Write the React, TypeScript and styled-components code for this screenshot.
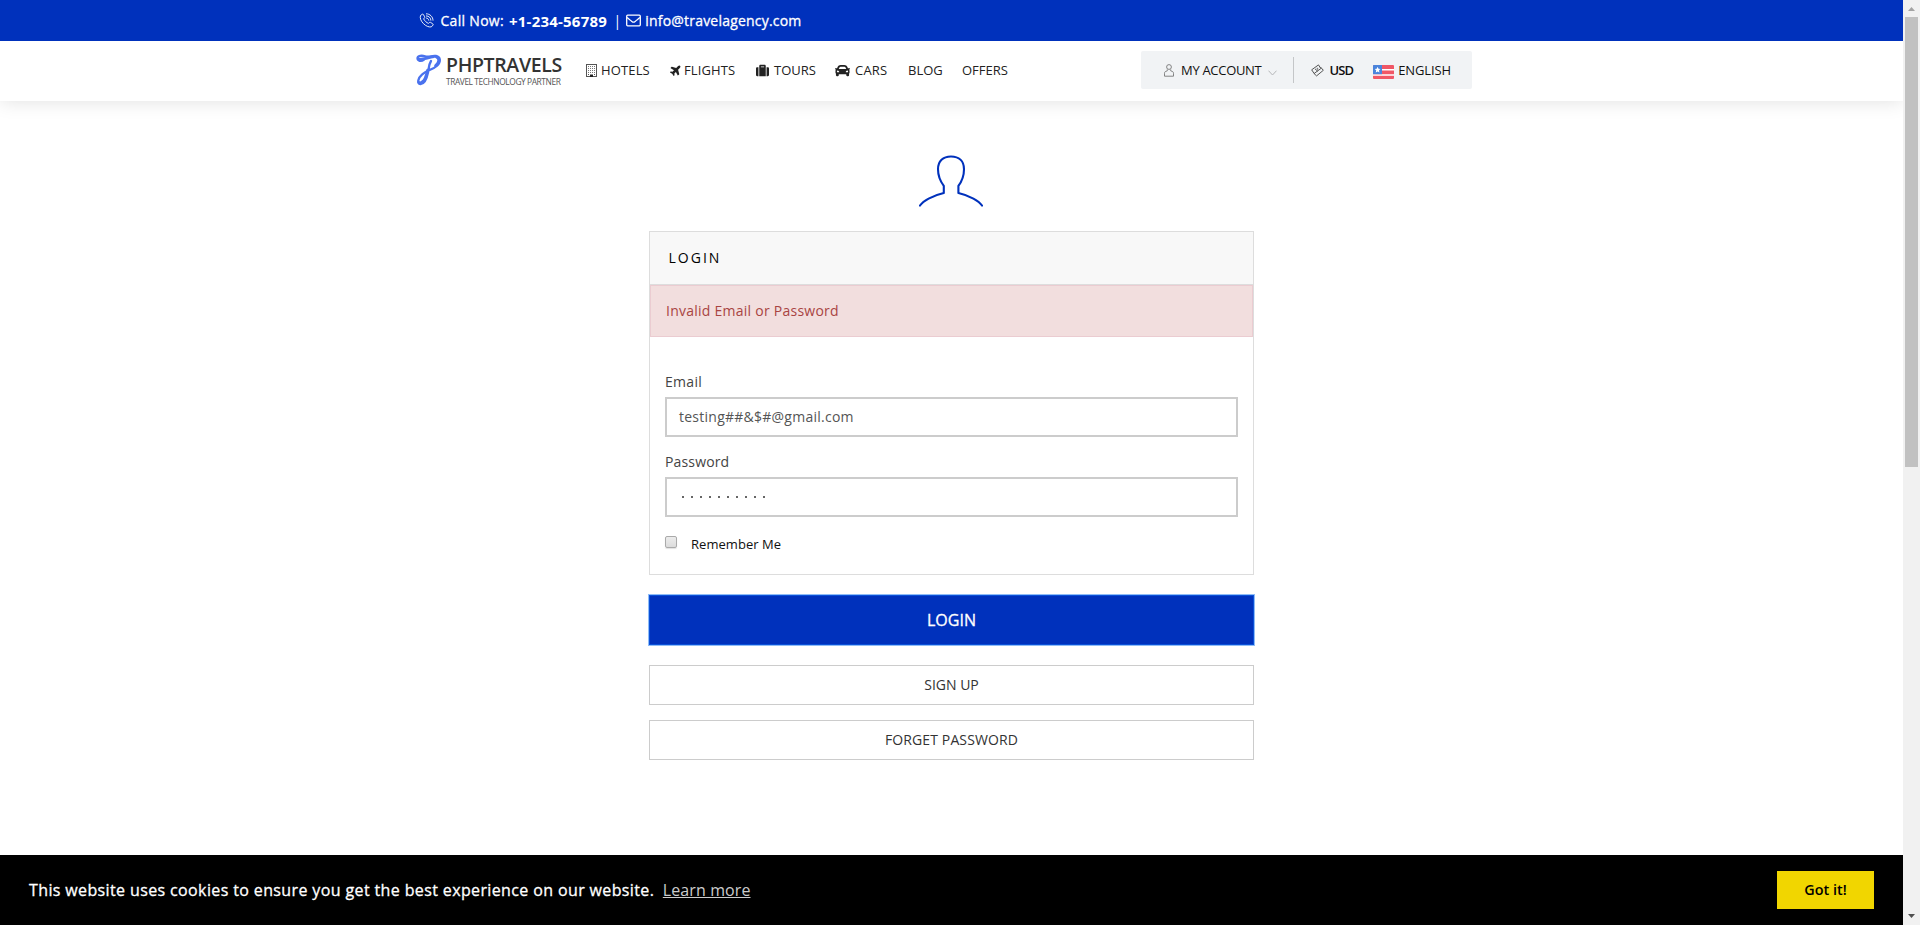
import React from "react";
import styled, { createGlobalStyle } from "styled-components";
import { FaPlane, FaSuitcase, FaCar } from "react-icons/fa";

const Global = createGlobalStyle`
  * { box-sizing: border-box; }
  html, body { margin: 0; padding: 0; background: #fff; overflow: hidden; }
  body { font-family: "Open Sans", "Noto Sans", sans-serif; font-size: 13px; color: #222; }
  svg { display: block; flex: none; }
`;

const Window = styled.div`
  display: flex;
  width: 1920px;
  height: 925px;
`;

const Page = styled.div`
  display: flex;
  flex-direction: column;
  width: 1903px;
  height: 925px;
  overflow: hidden;
`;

const TopBar = styled.div`
  position: relative;
  z-index: 1;
  display: flex;
  align-items: center;
  height: 41px;
  flex: none;
  padding-left: 419px;
  background: #0031bc;
  color: #fff;
`;

const Label = styled.span<{ $size?: number; $weight?: number; $track?: number; $gap?: number; $firm?: boolean }>`
  font-size: ${(p) => p.$size ?? 14}px;
  font-weight: ${(p) => p.$weight ?? 400};
  letter-spacing: ${(p) => p.$track ?? 0}px;
  margin-left: ${(p) => p.$gap ?? 0}px;
  line-height: 20px;
  white-space: nowrap;
  -webkit-text-stroke: ${(p) => (p.$firm ? "0.3px currentColor" : "0")};
`;

const NavBar = styled.nav`
  display: flex;
  align-items: center;
  height: 60px;
  flex: none;
  padding: 0 0 2px 416px;
  background: #fff;
  box-shadow: 0 0 20px rgba(0, 0, 0, 0.13);
`;

const Brand = styled.div`
  display: flex;
  width: 170px;
  gap: 4px;
  align-items: flex-start;
`;

const BrandText = styled.div`
  display: flex;
  flex-direction: column;
  gap: 1px;
  padding-top: 1px;
`;

const BrandName = styled.span`
  font-size: 19.5px;
  line-height: 20px;
  font-weight: 600;
  letter-spacing: -0.35px;
  color: #333;
  white-space: nowrap;
`;

const BrandTag = styled.span`
  font-size: 8.4px;
  line-height: 11px;
  letter-spacing: -0.42px;
  color: #555;
  white-space: nowrap;
`;

const Menu = styled.div`
  display: flex;
  width: 555px;
  gap: 20px;
`;

const MenuItem = styled.a<{ $width: number; $gap: number; $track?: number }>`
  display: flex;
  align-items: center;
  gap: ${(p) => p.$gap}px;
  width: ${(p) => p.$width}px;
  font-size: 13px;
  line-height: 20px;
  letter-spacing: ${(p) => p.$track ?? 0}px;
  color: #222;
  white-space: nowrap;
`;

const Tools = styled.div`
  display: flex;
  align-items: center;
  width: 331px;
  height: 38px;
  padding-left: 23px;
  border-radius: 2px;
  background: #f1f3f5;
  color: #111;
`;

const Divider = styled.i`
  width: 1px;
  height: 26px;
  margin: 0 17px 0 16px;
  background: #c4c6c8;
`;

const Main = styled.main`
  display: flex;
  flex: 1;
  flex-direction: column;
  width: 605px;
  margin-left: 649px;
  padding-top: 54px;
`;

const Avatar = styled.div`
  display: flex;
  justify-content: center;
  height: 76px;
  padding-right: 2px;
`;

const Card = styled.section`
  height: 344px;
  border: 1px solid #ddd;
`;

const CardHead = styled.header`
  display: flex;
  align-items: center;
  height: 53px;
  padding-left: 18.5px;
  background: #f8f8f8;
  border-bottom: 1px solid #ddd;
  color: #000;
`;

const Alert = styled.div`
  display: flex;
  align-items: center;
  height: 52px;
  padding-left: 15px;
  background: #f2dede;
  border: 1px solid #ebccd1;
  color: #a94442;
`;

const Form = styled.form`
  display: flex;
  flex-direction: column;
  padding: 35px 15px 0;
  color: #444;
`;

const Field = styled.div`
  display: flex;
  flex-direction: column;
  gap: 5px;
  height: 80px;
`;

const Box = styled.div`
  display: flex;
  align-items: center;
  height: 40px;
  padding-left: 12px;
  border: 2px solid #ccc;
  color: #555;
`;

const Dots = styled.span`
  display: flex;
  gap: 7px;
  padding: 0 0 0 3px;
  i {
    width: 2px;
    height: 2px;
    background: #666;
  }
`;

const Remember = styled.label`
  display: flex;
  align-items: flex-start;
  padding-top: 2px;
  color: #111;
`;

const Tick = styled.i`
  width: 12px;
  height: 12px;
  margin-top: 2px;
  border: 1px solid #aaa;
  border-radius: 2px;
  background: linear-gradient(#ececec, #dcdcdc);
  box-shadow: 0 1px 1px rgba(0, 0, 0, 0.12);
`;

const Submit = styled.button`
  height: 50px;
  margin: 20px 0;
  padding: 0;
  border: 1px solid #0a50d8;
  outline: 1px solid #8fbcf7;
  background: #0031bc;
  color: #fff;
  font: 400 16px/22px "Open Sans", sans-serif;
  -webkit-text-stroke: 0.3px currentColor;
`;

const Outline = styled.button<{ $track: number }>`
  height: 40px;
  margin-bottom: 15px;
  padding: 0;
  border: 1px solid #ccc;
  background: #fff;
  color: #333;
  font: 400 14px/20px "Open Sans", sans-serif;
  letter-spacing: ${(p) => p.$track}px;
`;

const Cookie = styled.footer`
  display: flex;
  align-items: center;
  height: 70px;
  flex: none;
  padding: 0 29px;
  background: #000;
  color: #fff;
`;

const Learn = styled.a`
  margin-left: 8.5px;
  font-size: 16px;
  line-height: 24px;
  color: #ccc;
  text-decoration: underline;
  letter-spacing: 0.1px;
`;

const Accept = styled.button`
  width: 97px;
  height: 38px;
  margin-left: auto;
  padding: 0;
  border: 0;
  background: #f1d600;
  color: #000;
  font: 600 14.4px/20px "Open Sans", sans-serif;
`;

const Scrollbar = styled.aside`
  display: flex;
  flex-direction: column;
  align-items: center;
  justify-content: space-between;
  width: 17px;
  height: 925px;
  background: #f1f1f1;
`;

const Thumb = styled.i`
  width: 13px;
  height: 450px;
  margin-bottom: auto;
  background: #c1c1c1;
`;

const Arrow = styled.svg`
  width: 17px;
  height: 17px;
`;

const PhoneIcon = () => (
  <svg width="15" height="15" viewBox="0 0 15 15" fill="none" stroke="#fff" strokeWidth="0.9">
    <path d="M3.4 1.2 1.5 2.5C.6 5 2.1 8.3 4.5 10.7c2.5 2.5 5.4 3.6 7.8 3.2l1.7-1.8c.3-.5.2-.9-.2-1.2l-2.200-1.500c-.5-.3-.9-.2-1.200.1l-.9.900C7.500 9.700 5.500 7.700 4.600 5.900l.9-1c.3-.3.300-.7.100-1.100L4.400 1.500c-.2-.4-.6-.5-1-.3Z" />
    <path d="M7 .8c4 0 7 3 7 6.800M7 2.900c2.800 0 4.900 2 4.900 4.700M7.100 5c1.500.1 2.600 1.200 2.700 2.600" />
  </svg>
);

const MailIcon = () => (
  <svg width="15" height="13" viewBox="0 0 15 13" fill="none" stroke="#fff" strokeWidth="1.3">
    <rect x=".7" y="1.2" width="13.6" height="10.6" rx="1" />
    <path d="M1 3.600c2 1.600 3.500 2.600 4.900 3.800.9.8 2.300.8 3.200 0C10.500 6.200 12 5.200 14 3.600" />
  </svg>
);

const LogoMark = () => (
  <svg width="26" height="32" viewBox="0 0 26 32" fill="none" stroke="#4a72ee" strokeLinecap="round" strokeLinejoin="round">
    <path d="M8 5.500C5 8 1.500 6.800 1.500 4.300 1.500 1.500 6 1.300 9 2.300 13 3.600 16 1.200 20 2c4.800 1 5 5.800 1 9.700-4 3.800-10.500 4.800-14.800 8.600C1.800 24 .8 29.800 4.300 30c4.200.2 6.500-5.500 7.700-11.500.8-4 .7-8 3-11.500" strokeWidth="2.3" />
    <path d="M3 5c4.500 1 9-1.800 15-2.300M2.800 28.300c1.800 1.400 5-.8 6.400-4.300 1-2.600 1.700-5 2.400-8" strokeWidth="2.7" />
    <path d="M20.500 3c3.600 1.600 2.800 5.600-.8 8.700" strokeWidth="3" />
  </svg>
);

const HotelIcon = () => (
  <svg width="11" height="13" viewBox="0 0 11 13" fill="none" stroke="#555">
    <rect x=".5" y=".5" width="10" height="12" />
    <path d="M2 2.500h7M2 4.500h7M2 6.500h7M2 8.500h7" strokeDasharray="1 1" stroke="#777" />
    <path d="M2 10.500h1M8 10.500h1" />
    <path d="M4 10.500h3V13H4z" fill="#222" stroke="none" />
  </svg>
);

const PersonIcon = () => (
  <svg width="10" height="13" viewBox="0 0 10 13" fill="none" stroke="#777" strokeWidth=".9">
    <circle cx="5" cy="3" r="2.4" />
    <path d="M3.300 5.500v1.300L1.300 7.600C.7 8 .5 8.700.5 9.300v2.900h9V9.300c0-.6-.2-1.300-.8-1.700L6.700 6.800V5.500" />
  </svg>
);

const ChevronIcon = () => (
  <svg width="9" height="11" viewBox="0 -5 9 11" fill="none" stroke="#b4b6b8" strokeWidth="1">
    <path d="m.5.7 4 4.300 4-4.300" />
  </svg>
);

const CashIcon = () => (
  <svg width="13" height="13" viewBox="0 0 13 13" fill="none" stroke="#444" strokeWidth=".9">
    <path d="M.7 5.800 7.500.900l2.300 3.700-6.700 4.900Z" />
    <path d="M9.400 2.900l2.900 3.400-6.700 5.600-2.800-2.600M4 4.900l2.700 2.300M5.700 4.200c1-.4 1.600.9.600 1.600" />
  </svg>
);

const FlagArt = styled.svg`
  margin-top: 4px;
`;

const Flag = () => (
  <FlagArt width="21" height="14" viewBox="0 0 21 14">
    <clipPath id="flag"><rect width="21" height="14" rx="1" /></clipPath>
    <g clipPath="url(#flag)">
      <rect width="21" height="14" fill="#f05766" />
      <path d="M0 4h21v1.600H0zM0 9.200h21v1.600H0z" fill="#fff" />
      <rect width="9" height="9.2" fill="#4a84dc" />
      <path d="m4.600 1.800.9 1.900 2 .2-1.500 1.400.4 2.100-1.800-1-1.800 1 .4-2.100-1.500-1.400 2-.2Z" fill="#fff" />
    </g>
  </FlagArt>
);

const UserIcon = () => (
  <svg width="66" height="53" viewBox="0 0 66 54" preserveAspectRatio="none" fill="none" stroke="#0031bc" strokeWidth="2.1" strokeLinecap="round" strokeLinejoin="round">
    <path d="M2 51.500C5 47 14 41.500 25.800 38.800V31.500C22.500 27 20 20 20 14.500 20 6 25 1.500 33 1.500S46 6 46 14.500C46 20 43.700 27 40.400 31.500V38.800C52 41.500 61 47 64 51.500" />
  </svg>
);

export default function App() {
  return (
    <Window>
      <Global />
      <Page>
        <TopBar>
          <PhoneIcon />
          <Label $gap={6.5} $track={0.3} $firm>Call Now:</Label>
          <Label $gap={5} $weight={700} $size={15} $track={0.22}>+1-234-56789</Label>
          <Label $gap={6.5}>|</Label>
          <Label $gap={5}><MailIcon /></Label>
          <Label $gap={4} $track={0.2} $firm>info@travelagency.com</Label>
        </TopBar>
        <NavBar>
          <Brand>
            <LogoMark />
            <BrandText>
              <BrandName>PHPTRAVELS</BrandName>
              <BrandTag>TRAVEL TECHNOLOGY PARTNER</BrandTag>
            </BrandText>
          </Brand>
          <Menu>
            <MenuItem $width={64} $gap={4} $track={0.15}><HotelIcon />HOTELS</MenuItem>
            <MenuItem $width={66} $gap={2} $track={0.1}><FaPlane size={12} transform="rotate(-45)" />FLIGHTS</MenuItem>
            <MenuItem $width={59} $gap={5}><FaSuitcase size={13} />TOURS</MenuItem>
            <MenuItem $width={53} $gap={5} $track={0.2}><FaCar size={15} />CARS</MenuItem>
            <MenuItem $width={34} $gap={0}>BLOG</MenuItem>
            <MenuItem $width={46} $gap={0}>OFFERS</MenuItem>
          </Menu>
          <Tools>
            <PersonIcon />
            <Label $size={13} $gap={7} $track={-0.3}>MY ACCOUNT</Label>
            <Label $gap={7}><ChevronIcon /></Label>
            <Divider />
            <CashIcon />
            <Label $size={13} $gap={5} $weight={600} $track={-0.9}>USD</Label>
            <Label $gap={20}><Flag /></Label>
            <Label $size={13} $gap={4} $track={-0.1}>ENGLISH</Label>
          </Tools>
        </NavBar>
        <Main>
          <Avatar><UserIcon /></Avatar>
          <Card>
            <CardHead><Label $track={2}>LOGIN</Label></CardHead>
            <Alert><Label $track={0.25}>Invalid Email or Password</Label></Alert>
            <Form>
              <Field>
                <Label $track={0.3}>Email</Label>
                <Box><Label $track={0.25}>testing##&amp;$#@gmail.com</Label></Box>
              </Field>
              <Field>
                <Label $track={0.15}>Password</Label>
                <Box><Dots>{Array.from({ length: 10 }, (_, i) => <i key={i} />)}</Dots></Box>
              </Field>
              <Remember>
                <Tick />
                <Label $size={13} $gap={14} $track={0.05}>Remember Me</Label>
              </Remember>
            </Form>
          </Card>
          <Submit>LOGIN</Submit>
          <Outline $track={0}>SIGN UP</Outline>
          <Outline $track={0.12}>FORGET PASSWORD</Outline>
        </Main>
        <Cookie>
          <Label $size={16} $track={0.375} $firm>This website uses cookies to ensure you get the best experience on our website.</Label>
          <Learn>Learn more</Learn>
          <Accept>Got it!</Accept>
        </Cookie>
      </Page>
      <Scrollbar>
        <Arrow viewBox="0 0 17 17"><path d="M5 11h7L8.500 7z" fill="#a3a3a3" /></Arrow>
        <Thumb />
        <Arrow viewBox="0 0 17 17"><path d="M5 6h7l-3.500 4z" fill="#505050" /></Arrow>
      </Scrollbar>
    </Window>
  );
}
